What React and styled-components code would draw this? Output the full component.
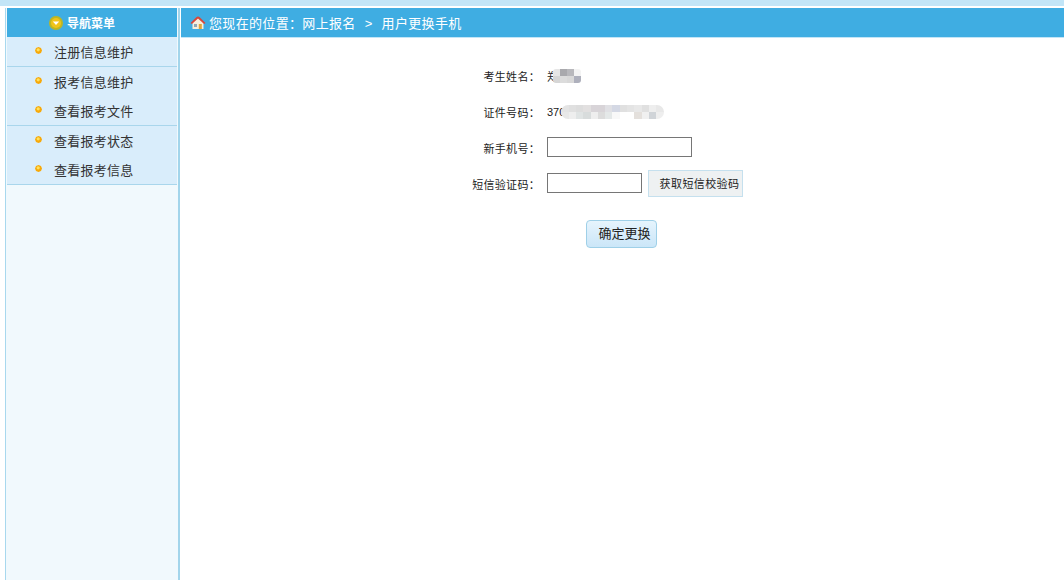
import React from "react";
import styled, { createGlobalStyle } from "styled-components";

const GlobalStyle = createGlobalStyle`
  html, body { margin: 0; padding: 0; height: 100%; background: #fff; }
  body { font-family: "Liberation Sans", "Noto Sans CJK SC", sans-serif; font-size: 12px; color: #333; }
`;

const Page = styled.div`
  width: 1064px;
  height: 580px;
  overflow: hidden;
  display: flex;
  flex-direction: column;
`;

const TopBand = styled.div`
  height: 6px;
  background: #c2e5f7;
  border-bottom: 2px solid #fff;
  flex: none;
`;

const Body = styled.div`
  flex: 1;
  display: flex;
  padding-left: 5px;
`;

const Sidebar = styled.aside`
  width: 170px;
  flex: none;
  padding: 0 1px;
  background: #f1f9fd;
  border-left: 1px solid #a8d8ee;
  border-right: 2px solid #a3d5eb;
  margin-right: 1px;
`;

const MenuTitle = styled.div`
  height: 29px;
  background: #3fade2;
  display: flex;
  align-items: center;
  justify-content: center;
  gap: 4px;
  padding-right: 20px;
  color: #fff;
  font-size: 12px;
  font-weight: bold;
`;

const MenuGroup = styled.div`
  background: #d9edfb;
  border-bottom: 1px solid #a9d6ec;
`;

const MenuItem = styled.div`
  height: 29px;
  display: flex;
  align-items: center;
  padding-left: 28px;
  font-size: 13px;
  letter-spacing: 0.25px;
  color: #333;
  gap: 12px;
`;

const Bullet = styled.svg`
  width: 7px;
  height: 7px;
  margin-top: -2px;
  flex: none;
`;

const Main = styled.main`
  flex: 1;
  min-width: 0;
`;

const Crumb = styled.div`
  height: 29px;
  background: #3fade2;
  border-bottom: 1px solid #c2e5f7;
  display: flex;
  align-items: center;
  padding-left: 9px;
  gap: 3px;
  color: #fff;
  font-size: 13px;
  letter-spacing: 0.33px;
`;

const CrumbArrow = styled.span`
  margin: 0 9px;
`;

const Form = styled.div`
  display: grid;
  grid-template-columns: 359px 1fr;
  grid-auto-rows: 36px;
  padding-top: 19px;
  align-items: center;
`;

const Label = styled.div`
  text-align: right;
  font-size: 11px;
  padding-top: 2px;
  color: #222;
  letter-spacing: 0.3px;
`;

const Value = styled.div`
  display: flex;
  align-items: center;
  padding: ${(p) => (p.$text ? "2px" : "0")} 0 0 7px;
  gap: 6px;
  font-size: 11px;
  color: #222;
`;

const Masked = styled.span`
  display: grid;
  grid-template-columns: repeat(${(p) => p.$cols}, ${(p) => p.$size}px);
  grid-auto-rows: ${(p) => p.$size}px;
  border-radius: ${(p) => p.$radius}px;
  overflow: hidden;
  filter: blur(0.4px);
  margin-left: ${(p) => p.$offset}px;
`;

const Cell = styled.span`
  background: ${(p) => p.$tone};
`;

const TextInput = styled.input`
  box-sizing: border-box;
  height: 20px;
  width: ${(p) => p.$w}px;
  border: 1px solid #767676;
  background: #fff;
  padding: 0;
  outline: none;
`;

const SmsButton = styled.button`
  box-sizing: border-box;
  width: 95px;
  height: 27px;
  border: 1px solid #c5e0ee;
  background: #eef1f2;
  color: #222;
  font: inherit;
  font-size: 11px;
  letter-spacing: 0.4px;
  padding: 0 0 0 8px;
`;

const SubmitRow = styled.div`
  padding: 19px 0 0 405px;
`;

const SubmitButton = styled.button`
  box-sizing: border-box;
  width: 71px;
  height: 28px;
  border: 1px solid #9fd0e8;
  border-radius: 4px;
  background: linear-gradient(#e6f4fd, #cbe6f8);
  color: #222;
  font: inherit;
  font-size: 13px;
  padding: 0 0 3px 6px;
`;

const menuGroups = [
  ["注册信息维护"],
  ["报考信息维护", "查看报考文件"],
  ["查看报考状态", "查看报考信息"],
];

const nameMask = [
  "#e6e6e6", "#a9a9ad", "#b8b8bc", "#f3f3f3",
  "#d6d6d6", "#dcdcdc", "#d8d8d8", "#aeb0bc",
];
const idMask = [
  "#e4e4e4", "#e0e0e0", "#dddddd", "#e2e0e0", "#d8d4d8", "#d8d4d8", "#e0e0e4",
  "#d4d8e4", "#e0e0e0", "#e4e4e4", "#e8e8e8", "#e0e0e0", "#eeeeee", "#e8e8e8",
  "#e8e8e8", "#eeeeee", "#e0e4e4", "#d8dcdc", "#eeeeee", "#dcdcdc", "#e4e8e8",
  "#f8f8f8", "#ffffff", "#ffffff", "#e4e0dc", "#f0f0f0", "#d0d4d8", "#eeeeee",
];

const App = () => {
  return (
    <Page>
      <GlobalStyle />
      <TopBand />
      <Body>
        <Sidebar>
          <MenuTitle>
            <svg width="14" height="14" viewBox="0 0 14 14">
              <circle cx="7" cy="7" r="7" fill="#bdb623" />
              <circle cx="7" cy="7" r="5" fill="#f0c419" />
              <path d="M3.8 5.6h6.4L7 9z" fill="#fff" />
            </svg>
            导航菜单
          </MenuTitle>
          {menuGroups.map((group) => (
            <MenuGroup key={group[0]}>
              {group.map((item) => (
                <MenuItem key={item}>
                  <Bullet viewBox="0 0 7 7">
                    <path d="M3.5 0 6 1 7 3.5 6 6 3.5 7 1 6 0 3.5 1 1z" fill="#f7a90a" />
                    <circle cx="3.2" cy="2.8" r="1.6" fill="#ffe25c" />
                  </Bullet>
                  {item}
                </MenuItem>
              ))}
            </MenuGroup>
          ))}
        </Sidebar>
        <Main>
          <Crumb>
            <svg width="16" height="15" viewBox="0 0 16 15">
              <path d="M2.5 7.5V14h11V7.5L8 2.5z" fill="#f7efdc" />
              <path d="M0.5 8 6 2.5Q8 .5 10 2.5L15.5 8l-1.4 1L8 3.6 1.9 9z" fill="#d9473a" />
              <rect x="8.8" y="9" width="3" height="5" fill="#e0a63c" />
              <rect x="4" y="9" width="3" height="3" fill="#8fa7b5" />
            </svg>
            <span>
              您现在的位置：网上报名<CrumbArrow>&gt;</CrumbArrow>用户更换手机
            </span>
          </Crumb>
          <Form>
            <Label>考生姓名：</Label>
            <Value $text>
              郑
              <Masked $cols={4} $size={7} $radius={3} $offset={-11}>
                {nameMask.map((tone, i) => (
                  <Cell key={i} $tone={tone} />
                ))}
              </Masked>
            </Value>
            <Label>证件号码：</Label>
            <Value $text>
              370
              <Masked $cols={14} $size={7.3} $radius={7} $offset={-10}>
                {idMask.map((tone, i) => (
                  <Cell key={i} $tone={tone} />
                ))}
              </Masked>
            </Value>
            <Label>新手机号：</Label>
            <Value>
              <TextInput $w={145} />
            </Value>
            <Label>短信验证码：</Label>
            <Value>
              <TextInput $w={95} />
              <SmsButton>获取短信校验码</SmsButton>
            </Value>
          </Form>
          <SubmitRow>
            <SubmitButton>确定更换</SubmitButton>
          </SubmitRow>
        </Main>
      </Body>
    </Page>
  );
};

export default App;
